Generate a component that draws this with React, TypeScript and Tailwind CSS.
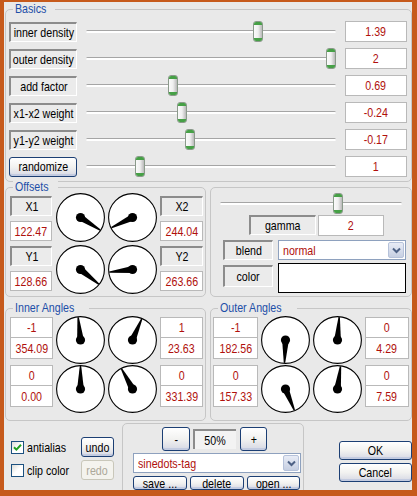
import React from "react";

const FONT = "font-['Liberation_Sans',Arial,sans-serif]";

type KP = { className?: string; children?: React.ReactNode };

function N({ children, left }: { children?: React.ReactNode; left?: boolean }) {
  return (
    <span
      className={
        left
          ? "inline-block origin-left scale-x-[0.82] whitespace-nowrap"
          : "inline-block origin-center scale-x-[0.82] whitespace-nowrap"
      }
    >
      {children}
    </span>
  );
}

function Label({ className = "", children }: KP) {
  return (
    <div
      className={`flex shrink-0 items-center justify-center border-t-2 border-l-2 border-b border-r border-t-[#8c8c8c] border-l-[#8c8c8c] border-b-white border-r-white bg-[#ebebeb] text-[13px] leading-none text-black ${className}`}
    >
      <N>{children}</N>
    </div>
  );
}

function Value({ className = "", children }: KP) {
  return (
    <div
      className={`flex shrink-0 items-center justify-center border border-[#b9b9b9] bg-white text-[13px] leading-none text-[#b0100c] ${className}`}
    >
      <N>{children}</N>
    </div>
  );
}

function Thumb({ left }: { left: number }) {
  return (
    <div
      className="absolute top-0 h-[21px] w-[10px] overflow-hidden rounded-[3px] border border-[#8b9a8b] bg-linear-to-r from-[#fafafa] via-[#f0f0f0] to-[#b9b9b9]"
      style={{ left }}
    >
      <div className="h-[3px] bg-[#46a046]" />
      <div className="absolute bottom-0 left-0 right-0 h-[3px] bg-[#46a046]" />
    </div>
  );
}

function Slider({ className = "", thumb }: { className?: string; thumb: number }) {
  return (
    <div className={`relative h-[21px] shrink-0 ${className}`}>
      <div className="absolute left-0 right-0 top-[9px] h-[3px] rounded-full border-t border-[#a5a5a5] bg-white" />
      <Thumb left={thumb} />
    </div>
  );
}

function Group({ title, className = "", children }: KP & { title?: string }) {
  return (
    <div className={`relative shrink-0 rounded-[5px] border border-[#c6c6c6] ${className}`}>
      {title && (
        <span className="absolute left-[7px] top-[-8px] bg-[#e9e9e9] px-[2px] text-[13px] leading-[14px] text-[#1d4fa8]">
          <N left>{title}</N>
        </span>
      )}
      {children}
    </div>
  );
}

function Dial({ a, h = 49 }: { a: number; h?: number }) {
  const w = 49;
  const cx = w / 2;
  const cy = h / 2;
  const rx = w / 2 - 0.6;
  const ry = h / 2 - 0.6;
  const rad = (a * Math.PI) / 180;
  const s = Math.sin(rad);
  const c = Math.cos(rad);
  const L = Math.min(rx, ry) - 0.5;
  const tx = cx + L * s;
  const ty = cy - L * c;
  const bw = 3.4;
  const tw = 0.7;
  const pts = [
    [cx + c * bw, cy + s * bw],
    [tx + c * tw, ty + s * tw],
    [tx - c * tw, ty - s * tw],
    [cx - c * bw, cy - s * bw],
  ]
    .map((p) => p.join(","))
    .join(" ");
  return (
    <svg width={w} height={h} viewBox={`0 0 ${w} ${h}`} className="block shrink-0">
      <ellipse cx={cx} cy={cy} rx={rx} ry={ry} fill="white" stroke="black" strokeWidth="1.1" />
      <polygon points={pts} fill="black" />
      <circle cx={cx} cy={cy} r="4.6" fill="black" />
    </svg>
  );
}

function XPButton({ className = "", children, disabled }: KP & { disabled?: boolean }) {
  return (
    <div
      className={
        disabled
          ? `flex shrink-0 items-center justify-center rounded-[3px] border border-[#c9c7ba] bg-[#f4f3ee] text-[13px] leading-none text-[#aca899] ${className}`
          : `flex shrink-0 items-center justify-center rounded-[3px] border border-[#1c3f74] bg-linear-to-b from-white via-[#f2f2f0] to-[#d6d8e4] text-[13px] leading-none text-black shadow-[inset_0_-2px_0_#c3cbe0] ${className}`
      }
    >
      <N>{children}</N>
    </div>
  );
}

function Chevron() {
  return (
    <svg width="9" height="7" viewBox="0 0 9 7">
      <path d="M1 1.5 L4.5 5 L8 1.5" fill="none" stroke="#4d6185" strokeWidth="2" />
    </svg>
  );
}

function Select({ className = "", children }: KP) {
  return (
    <div className={`flex shrink-0 items-stretch border border-[#8ea1be] bg-white ${className}`}>
      <div className="flex flex-1 items-center pl-[4px] text-[13px] leading-none text-[#b0100c]">
        <N left>{children}</N>
      </div>
      <div className="m-[1px] flex w-[16px] items-center justify-center rounded-[2px] border border-[#b6c2da] bg-linear-to-b from-[#e8ecf6] to-[#c6cfe2]">
        <Chevron />
      </div>
    </div>
  );
}

function Check({ checked }: { checked?: boolean }) {
  return (
    <div className="flex h-[13px] w-[13px] shrink-0 items-center justify-center border border-[#1c5180] bg-linear-to-br from-[#dcdcd7] via-white to-white">
      {checked && (
        <svg width="9" height="9" viewBox="0 0 9 9">
          <path d="M1 4.2 L3.4 6.6 L8 1.8" fill="none" stroke="#21a121" strokeWidth="2" />
        </svg>
      )}
    </div>
  );
}

const basics = [
  { label: "inner density", value: "1.39", thumb: 167, btn: false },
  { label: "outer density", value: "2", thumb: 240, btn: false },
  { label: "add factor", value: "0.69", thumb: 82, btn: false },
  { label: "x1-x2 weight", value: "-0.24", thumb: 91, btn: false },
  { label: "y1-y2 weight", value: "-0.17", thumb: 99, btn: false },
  { label: "randomize", value: "1", thumb: 49, btn: true },
];

function AngleCol({ vals, className = "" }: { vals: string[]; className?: string }) {
  return (
    <div className={`flex shrink-0 flex-col ${className}`}>
      <Value className="h-[21px] w-full">{vals[0]}</Value>
      <Value className="h-[21px] w-full border-t-0">{vals[1]}</Value>
      <Value className="mt-[6px] h-[21px] w-full">{vals[2]}</Value>
      <Value className="h-[21px] w-full border-t-0">{vals[3]}</Value>
    </div>
  );
}

export default function App() {
  return (
    <div className={`h-[496px] w-[417px] bg-[#c65a1c] pl-[4px] pt-[2px] ${FONT}`}>
      <div className="flex h-[488px] w-[408px] flex-col overflow-hidden bg-[#e9e9e9] pl-[1px] pt-[7px]">
        {/* Basics */}
        <Group title="Basics" className="h-[173px] w-[407px]">
          <div className="flex flex-col gap-[6px] pl-[3px] pt-[11px]">
            {basics.map((r) => (
              <div key={r.label} className="flex h-[21px] items-center">
                {r.btn ? (
                  <XPButton className="h-[20px] w-[68px]">{r.label}</XPButton>
                ) : (
                  <Label className="h-[20px] w-[68px]">{r.label}</Label>
                )}
                <Slider className="ml-[9px] w-[250px]" thumb={r.thumb} />
                <Value className="ml-[9px] h-[21px] w-[62px]">{r.value}</Value>
              </div>
            ))}
          </div>
        </Group>

        {/* Offsets + gamma */}
        <div className="mt-[5px] flex gap-[4px]">
          <Group title="Offsets" className="h-[110px] w-[201px]">
            <div className="flex items-start pl-[4px]">
              <div className="flex w-[42px] shrink-0 flex-col gap-[5px] pt-[8px]">
                <Label className="h-[20px] w-full">X1</Label>
                <Value className="h-[20px] w-full">122.47</Value>
                <Label className="h-[20px] w-full">Y1</Label>
                <Value className="h-[20px] w-full">128.66</Value>
              </div>
              <div className="ml-[4px] grid grid-cols-2 gap-[3px] pt-[5px]">
                <Dial a={122.47} />
                <Dial a={244.04} />
                <Dial a={128.66} />
                <Dial a={263.66} />
              </div>
              <div className="ml-[3px] flex w-[43px] shrink-0 flex-col gap-[5px] pt-[8px]">
                <Label className="h-[20px] w-full">X2</Label>
                <Value className="h-[20px] w-full">244.04</Value>
                <Label className="h-[20px] w-full">Y2</Label>
                <Value className="h-[20px] w-full">263.66</Value>
              </div>
            </div>
          </Group>
          <Group className="h-[110px] w-[202px]">
            <div className="flex flex-col pt-[5px]">
              <Slider className="ml-[9px] w-[182px]" thumb={113} />
              <div className="ml-[38px] mt-[1px] flex h-[21px]">
                <Label className="h-[20px] w-[67px]">gamma</Label>
                <Value className="ml-[2px] h-[21px] w-[66px]">2</Value>
              </div>
              <div className="ml-[12px] mt-[4px] flex h-[20px] items-center">
                <Label className="h-[20px] w-[50px]">blend</Label>
                <Select className="ml-[5px] h-[20px] w-[128px]">normal</Select>
              </div>
              <div className="ml-[12px] mt-[3px] flex items-start">
                <Label className="mt-[2px] h-[22px] w-[50px]">color</Label>
                <div className="ml-[5px] h-[30px] w-[128px] border border-black bg-white" />
              </div>
            </div>
          </Group>
        </div>

        {/* Angles */}
        <div className="mt-[11px] flex gap-[4px]">
          <Group title="Inner Angles" className="h-[113px] w-[201px]">
            <div className="flex items-start pl-[4px]">
              <AngleCol className="w-[43px] pt-[8px]" vals={["-1", "354.09", "0", "0.00"]} />
              <div className="ml-[3px] grid grid-cols-2 gap-x-[3px] gap-y-[1px] pt-[7px]">
                <Dial a={354.09} h={48} />
                <Dial a={23.63} h={48} />
                <Dial a={0} h={48} />
                <Dial a={331.39} h={48} />
              </div>
              <AngleCol className="ml-[3px] w-[43px] pt-[8px]" vals={["1", "23.63", "0", "331.39"]} />
            </div>
          </Group>
          <Group title="Outer Angles" className="h-[113px] w-[202px]">
            <div className="flex items-start pl-[2px]">
              <AngleCol className="w-[45px] pt-[8px]" vals={["-1", "182.56", "0", "157.33"]} />
              <div className="ml-[3px] grid grid-cols-2 gap-x-[3px] gap-y-[1px] pt-[7px]">
                <Dial a={182.56} h={48} />
                <Dial a={4.29} h={48} />
                <Dial a={157.33} h={48} />
                <Dial a={7.59} h={48} />
              </div>
              <AngleCol className="ml-[3px] w-[44px] pt-[8px]" vals={["0", "4.29", "0", "7.59"]} />
            </div>
          </Group>
        </div>

        {/* Bottom */}
        <div className="flex items-start">
          <div className="ml-[6px] flex flex-col gap-[3px] pt-[16px]">
            <div className="flex h-[20px] items-center">
              <div className="flex w-[70px] items-center gap-[3px]">
                <Check checked />
                <span className="text-[13px] leading-none text-black">
                  <N left>antialias</N>
                </span>
              </div>
              <XPButton className="h-[20px] w-[33px]">undo</XPButton>
            </div>
            <div className="flex h-[20px] items-center">
              <div className="flex w-[70px] items-center gap-[3px]">
                <Check />
                <span className="text-[13px] leading-none text-black">
                  <N left>clip color</N>
                </span>
              </div>
              <XPButton disabled className="h-[20px] w-[33px]">
                redo
              </XPButton>
            </div>
          </div>
          <Group className="ml-[8px] mt-[2px] h-[80px] w-[182px]">
            <div className="flex flex-col">
              <div className="ml-[39px] mt-[3px] flex items-center">
                <XPButton className="h-[24px] w-[28px]">-</XPButton>
                <div className="ml-[3px] flex h-[20px] w-[43px] items-center justify-center border-t-2 border-l-2 border-t-[#8c8c8c] border-l-[#8c8c8c] bg-[#f3f3f3] text-[13px] leading-none text-black">
                  <N>50%</N>
                </div>
                <XPButton className="ml-[4px] h-[24px] w-[27px]">+</XPButton>
              </div>
              <Select className="ml-[10px] mt-[2px] h-[20px] w-[168px]">sinedots-tag</Select>
              <div className="ml-[10px] mt-[3px] flex gap-[3px]">
                <XPButton className="h-[14px] w-[54px]">save ...</XPButton>
                <XPButton className="h-[14px] w-[54px]">delete</XPButton>
                <XPButton className="h-[14px] w-[53px]">open ...</XPButton>
              </div>
            </div>
          </Group>
          <div className="ml-[35px] flex flex-col gap-[3px] pt-[20px]">
            <XPButton className="h-[19px] w-[73px]">OK</XPButton>
            <XPButton className="h-[19px] w-[73px]">Cancel</XPButton>
          </div>
        </div>
      </div>
    </div>
  );
}
